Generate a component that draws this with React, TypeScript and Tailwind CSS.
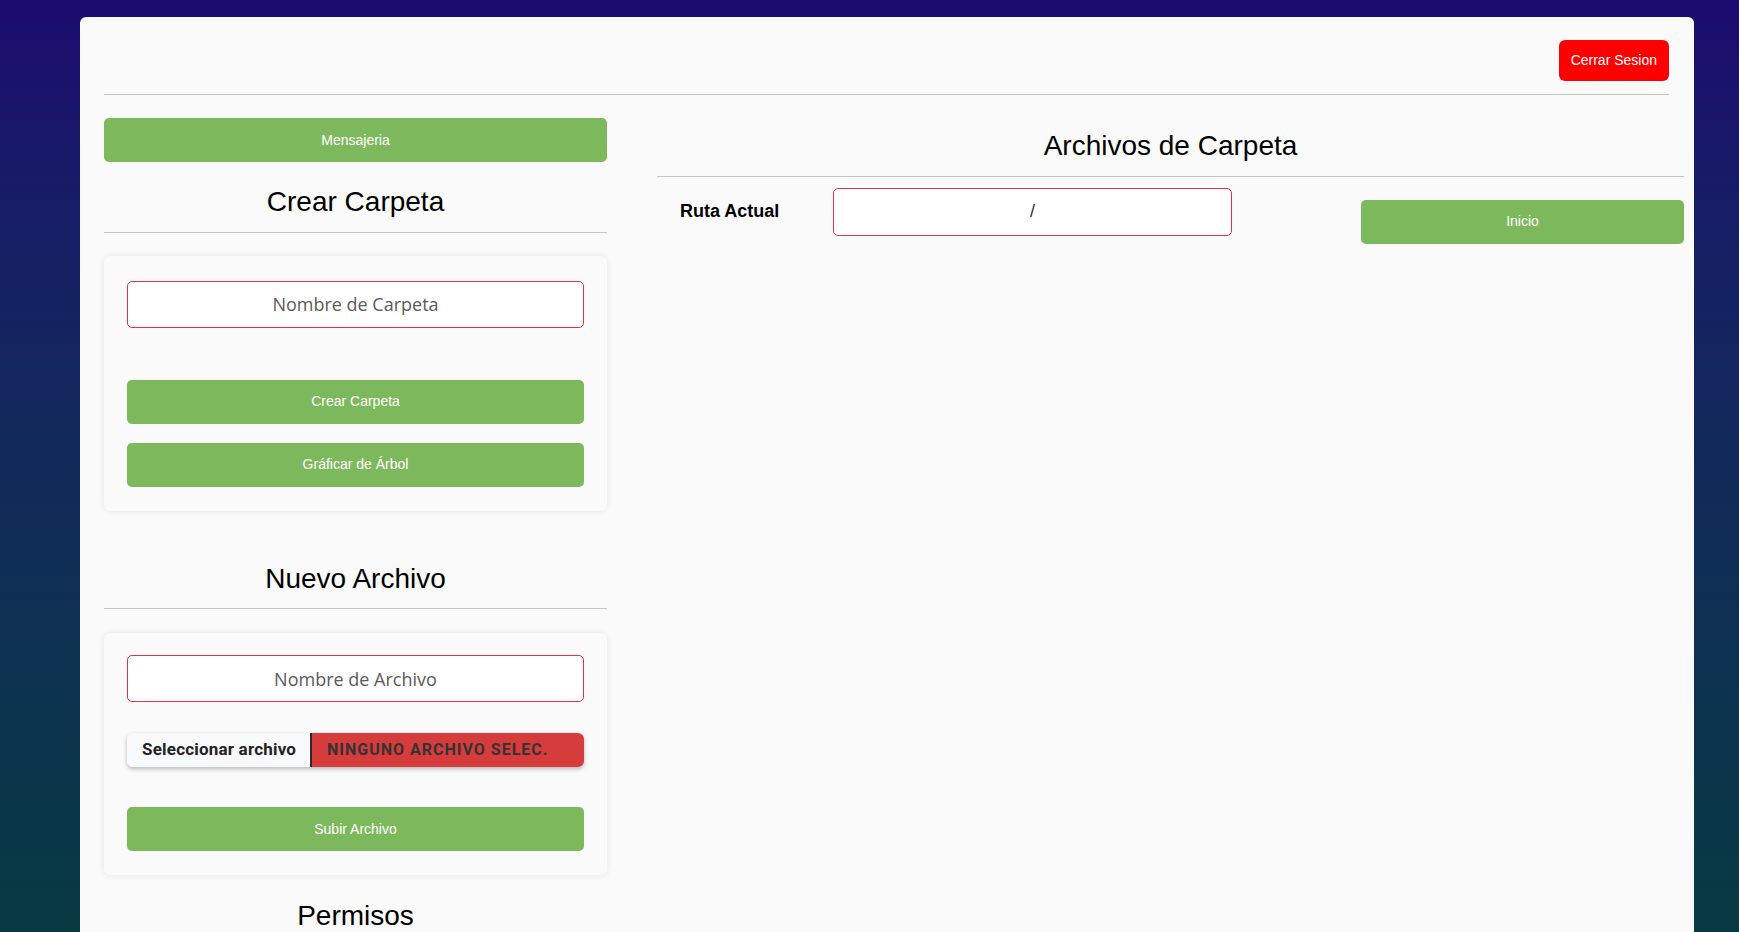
import React from 'react'

function GreenButton({ label, className = '' }: { label: string; className?: string }) {
  return (
    <button
      type="button"
      className={`flex h-[44px] w-full items-center justify-center rounded-[5px] bg-[#7db95c] text-[14px] text-white ${className}`}
    >
      {label}
    </button>
  )
}

function SectionTitle({ title, className = '' }: { title: string; className?: string }) {
  return (
    <div className={className}>
      <h3 className="text-center text-[28px] leading-[1.2] text-black">{title}</h3>
      <hr className="mt-[13px] border-t border-[#c4c4c4]" />
    </div>
  )
}

function TextInput({ placeholder, className = '' }: { placeholder: string; className?: string }) {
  return (
    <input
      type="text"
      placeholder={placeholder}
      className={`block h-[47px] w-full rounded-[5px] border border-[#dc3545] bg-white text-center text-[18px] text-[#333] outline-none placeholder:text-[#5a5a5a] ${className}`}
      style={{ fontFamily: '"Open Sans", "Liberation Sans", sans-serif' }}
    />
  )
}

export default function App() {
  return (
    <div
      className="h-screen overflow-hidden bg-linear-to-b from-[#1c0a6f] to-[#083a43] pt-[17px]"
      style={{ fontFamily: '"Liberation Sans", Arial, sans-serif' }}
    >
      <div className="ml-[80px] w-[1614px] rounded-md bg-[#fafafa] pl-6 pr-[25px] pt-[23px] pb-10">
        <div className="flex justify-end">
          <button
            type="button"
            className="h-[41px] rounded-md bg-[#ff0000] px-3 text-[14px] text-white"
          >
            Cerrar Sesion
          </button>
        </div>
        <hr className="mt-[13px] border-t border-[#c4c4c4]" />

        <div className="mt-[23px] flex">
          {/* left column */}
          <div className="w-[503px] shrink-0">
            <GreenButton label="Mensajeria" />

            <SectionTitle title="Crear Carpeta" className="mt-[23px]" />
            <section className="mt-[23px] rounded-md bg-[#fafafa] px-[23px] pt-[25px] pb-[24px] shadow-[0_0_6px_rgba(0,0,0,0.09)]">
              <TextInput placeholder="Nombre de Carpeta" />
              <GreenButton label="Crear Carpeta" className="mt-[52px]" />
              <GreenButton label="Gráficar de Árbol" className="mt-[19px]" />
            </section>

            <SectionTitle title="Nuevo Archivo" className="mt-[51px]" />
            <section className="mt-[24px] rounded-md bg-[#fafafa] px-[23px] pt-[22px] pb-[24px] shadow-[0_0_6px_rgba(0,0,0,0.09)]">
              <TextInput placeholder="Nombre de Archivo" />
              <div
                className="mt-[31px] flex h-[34px] overflow-hidden rounded-md shadow-[0_2px_4px_rgba(0,0,0,0.28)]"
                style={{ fontFamily: 'Roboto, "Liberation Sans", sans-serif' }}
              >
                <span className="flex w-[185px] items-center border-r-2 border-[#2a2a2a] bg-[#f8f9fb] pl-[15px] text-[17px] font-bold tracking-[0.2px] text-[#222]">
                  Seleccionar archivo
                </span>
                <span className="flex flex-1 items-center bg-[#d63c3c] pl-[15px] text-[16px] font-bold uppercase tracking-[1px] text-[#333]">
                  Ninguno archivo selec.
                </span>
              </div>
              <GreenButton label="Subir Archivo" className="mt-[40px]" />
            </section>

            <h3 className="mt-[24px] text-center text-[28px] leading-[1.2] text-black">Permisos</h3>
          </div>

          {/* right column */}
          <div className="-mr-[15px] ml-[50px] w-[1027px] shrink-0">
            <h3 className="mt-[11px] text-center text-[28px] leading-[1.2] text-black">
              Archivos de Carpeta
            </h3>
            <hr className="mt-[13px] border-t border-[#c4c4c4]" />
            <div className="mt-[11px] flex items-start">
              <label className="flex h-[48px] w-[176px] items-center pl-[23px] text-[18px] font-bold text-black">
                Ruta Actual
              </label>
              <input
                type="text"
                readOnly
                value="/"
                className="h-[48px] w-[399px] rounded-[5px] border border-[#dc3545] bg-white text-center text-[18px] text-[#333] outline-none"
              />
              <button
                type="button"
                className="mt-[12px] ml-auto flex h-[44px] w-[323px] items-center justify-center rounded-[5px] bg-[#7db95c] text-[14px] text-white"
              >
                Inicio
              </button>
            </div>
          </div>
        </div>
      </div>
    </div>
  )
}
